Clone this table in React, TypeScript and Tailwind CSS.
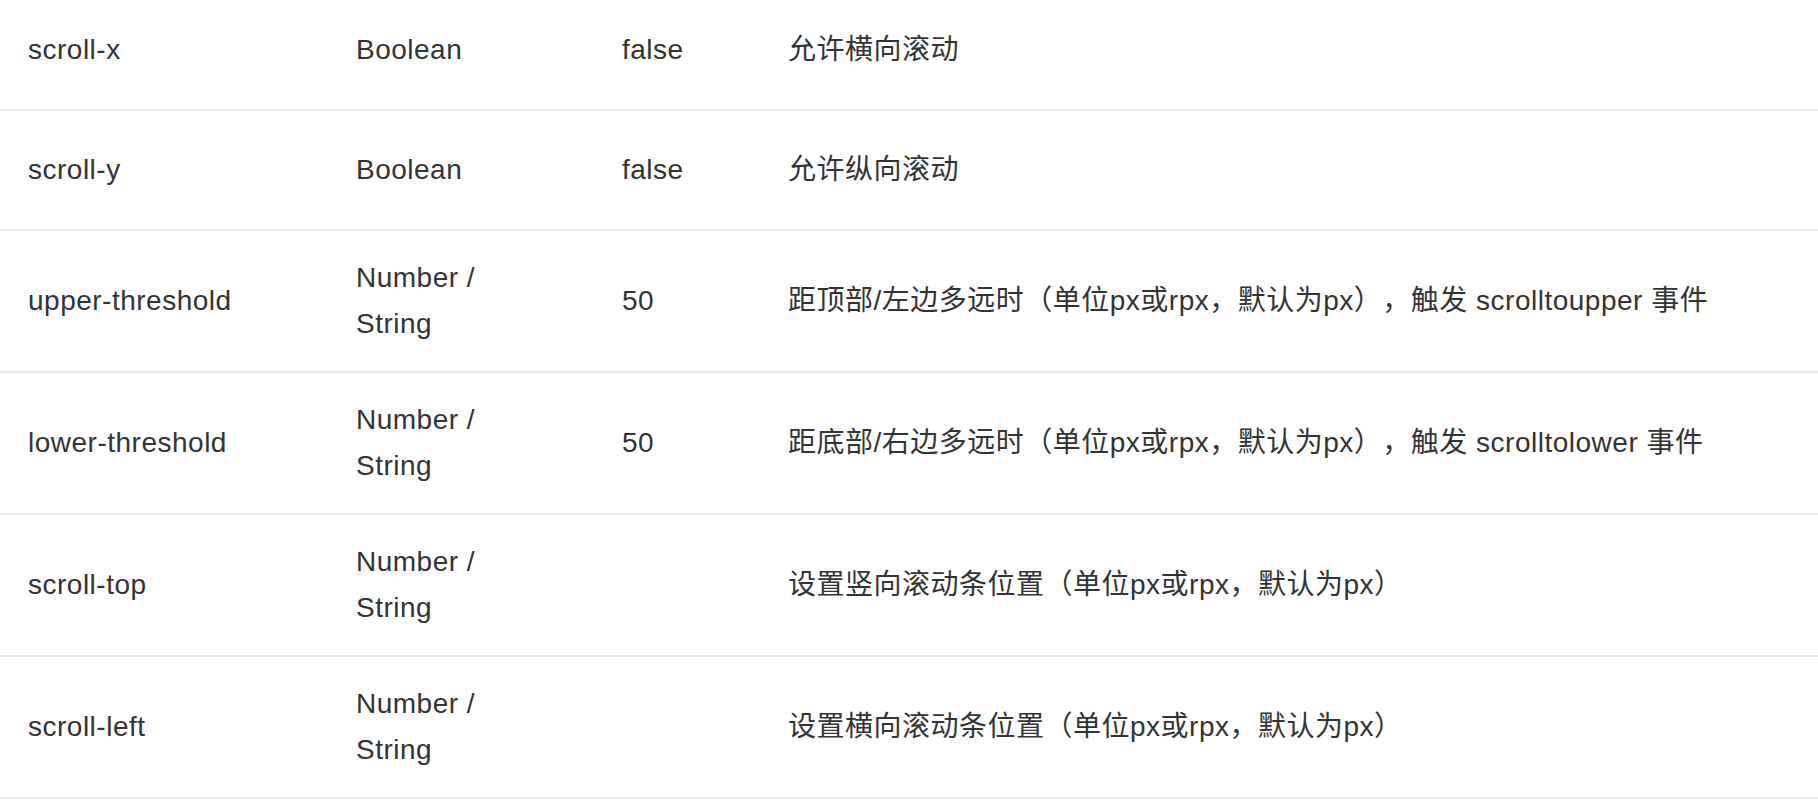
const rows: { name: string; type: string[]; def: string; desc: string }[] = [
  { name: "scroll-x", type: ["Boolean"], def: "false", desc: "允许横向滚动" },
  { name: "scroll-y", type: ["Boolean"], def: "false", desc: "允许纵向滚动" },
  {
    name: "upper-threshold",
    type: ["Number /", "String"],
    def: "50",
    desc: "距顶部/左边多远时（单位px或rpx，默认为px），触发 scrolltoupper 事件",
  },
  {
    name: "lower-threshold",
    type: ["Number /", "String"],
    def: "50",
    desc: "距底部/右边多远时（单位px或rpx，默认为px），触发 scrolltolower 事件",
  },
  {
    name: "scroll-top",
    type: ["Number /", "String"],
    def: "",
    desc: "设置竖向滚动条位置（单位px或rpx，默认为px）",
  },
  {
    name: "scroll-left",
    type: ["Number /", "String"],
    def: "",
    desc: "设置横向滚动条位置（单位px或rpx，默认为px）",
  },
]

export default function App() {
  return (
    <div className="h-[804px] w-full overflow-hidden bg-white font-['Liberation_Sans','Noto_Sans_CJK_SC',sans-serif] text-[28px] leading-[46px] tracking-[0.5px] text-[#333] [text-spacing-trim:space-all]">
      <div className="-mt-[9px]">
        {rows.map((r) => (
          <div
            key={r.name}
            className={`grid grid-cols-[356px_266px_166px_1fr] items-center border-b-2 border-[#e7e7eb] ${
              r.type.length > 1 ? "h-[142px]" : "h-[120px]"
            }`}
          >
            <div className="pl-[28px]">{r.name}</div>
            <div>
              {r.type.map((t) => (
                <div key={t}>{t}</div>
              ))}
            </div>
            <div>{r.def}</div>
            <div>{r.desc}</div>
          </div>
        ))}
      </div>
    </div>
  )
}
